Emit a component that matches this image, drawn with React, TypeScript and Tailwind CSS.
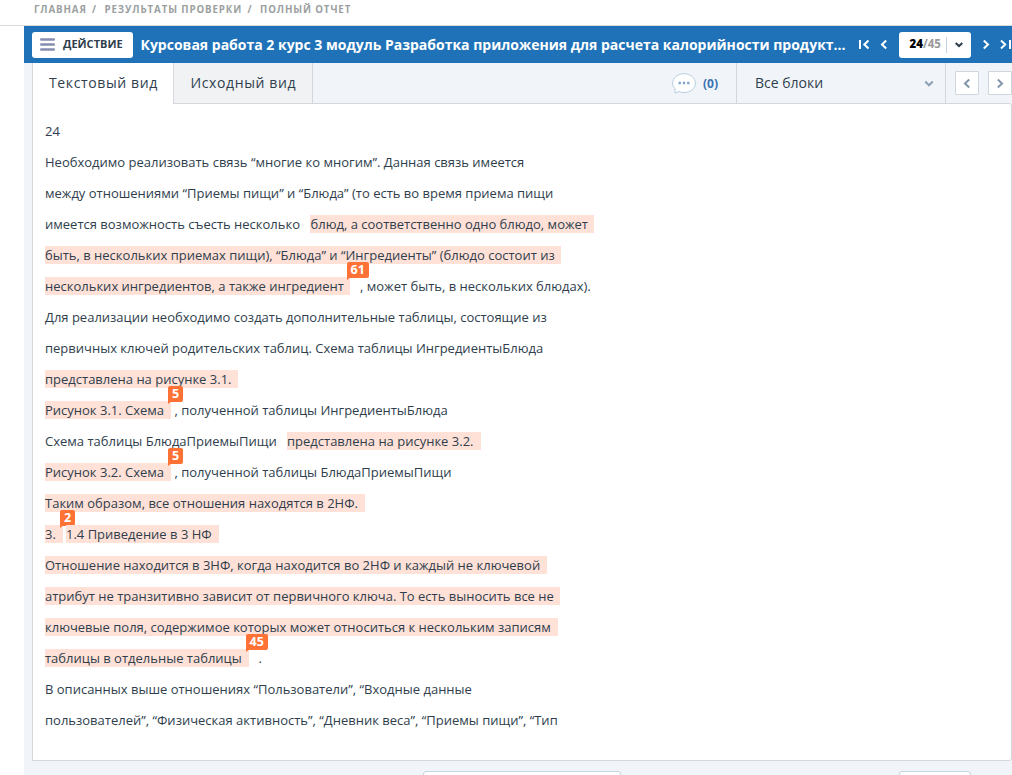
import React from "react";

type Segment = { text: string; className: string; marked?: boolean; badge?: string };

const lines: Segment[][] = [
  [{ text: "24", className: "" }],
  [{ text: "Необходимо реализовать связь “многие ко многим”. Данная связь имеется", className: "" }],
  [{ text: "между отношениями “Приемы пищи” и “Блюда” (то есть во время приема пищи", className: "" }],
  [
    { text: "имеется возможность съесть несколько", className: "w-[265px]" },
    { text: "блюд, а соответственно одно блюдо, может", className: "w-[284px] pl-[0.5px]", marked: true },
  ],
  [{ text: "быть, в нескольких приемах пищи), “Блюда” и “Ингредиенты” (блюдо состоит из", className: "w-[516px]", marked: true }],
  [
    { text: "нескольких ингредиентов, а также ингредиент", className: "w-[305px] mr-[10px]", marked: true, badge: "61" },
    { text: ", может быть, в нескольких блюдах).", className: "" },
  ],
  [{ text: "Для реализации необходимо создать дополнительные таблицы, состоящие из", className: "" }],
  [{ text: "первичных ключей родительских таблиц. Схема таблицы ИнгредиентыБлюда", className: "" }],
  [{ text: "представлена на рисунке 3.1.", className: "w-[193px]", marked: true }],
  [
    { text: "Рисунок 3.1. Схема", className: "w-[126px] mr-[3.5px]", marked: true, badge: "5" },
    { text: ", полученной таблицы ИнгредиентыБлюда", className: "" },
  ],
  [
    { text: "Схема таблицы БлюдаПриемыПищи", className: "w-[242px]" },
    { text: "представлена на рисунке 3.2.", className: "w-[194px]", marked: true },
  ],
  [
    { text: "Рисунок 3.2. Схема", className: "w-[126px] mr-[3.5px]", marked: true, badge: "5" },
    { text: ", полученной таблицы БлюдаПриемыПищи", className: "" },
  ],
  [{ text: "Таким образом, все отношения находятся в 2НФ.", className: "w-[320px]", marked: true }],
  [
    { text: "3.", className: "w-[18px] mr-[3px]", marked: true, badge: "2" },
    { text: "1.4 Приведение в 3 НФ", className: "w-[153px]", marked: true },
  ],
  [{ text: "Отношение находится в 3НФ, когда находится во 2НФ и каждый не ключевой", className: "w-[502px]", marked: true }],
  [{ text: "атрибут не транзитивно зависит от первичного ключа. То есть выносить все не", className: "w-[515px]", marked: true }],
  [{ text: "ключевые поля, содержимое которых может относиться к нескольким записям", className: "w-[513px]", marked: true }],
  [
    { text: "таблицы в отдельные таблицы", className: "w-[204px] mr-[9.500px]", marked: true, badge: "45" },
    { text: ".", className: "" },
  ],
  [{ text: "В описанных выше отношениях “Пользователи”, “Входные данные", className: "" }],
  [{ text: "пользователей”, “Физическая активность”, “Дневник веса”, “Приемы пищи”, “Тип", className: "" }],
];

function Chevron({ dir, className }: { dir: "left" | "right" | "down"; className: string }) {
  const d = { left: "M7.2 1.5 3 5.5l4.2 4", right: "M2.8 1.5 7 5.5l-4.2 4", down: "M1.2 3.5 5 7.3l3.8-3.8" }[dir];
  return (
    <svg viewBox="0 0 10 11" className={className} fill="none" stroke="currentColor" strokeWidth="2">
      <path d={d} />
    </svg>
  );
}

function Badge({ value }: { value: string }) {
  return (
    <span className="absolute -top-[15px] right-[3px]">
      <span
        className={`absolute top-0 left-0 flex h-4 items-center justify-center rounded-[2px] rounded-bl-none bg-[#ff7236] text-[12.5px] leading-4 font-bold text-white ${
          value.length > 1 ? "w-[21.500px]" : "w-[15px]"
        }`}
      >
        {value}
      </span>
      <svg viewBox="0 0 4 3" className="absolute top-[15px] left-0 h-[3px] w-1 fill-[#ff7236]">
        <path d="M0 0h4L0 3z" />
      </svg>
    </span>
  );
}

function Line({ segments }: { segments: Segment[] }) {
  return (
    <div className="flex h-[31px] items-center whitespace-nowrap">
      {segments.map((s, i) => (
        <span
          key={i}
          className={`relative h-[18px] shrink-0 leading-[18px] ${s.marked ? "bg-[#ffe1d7]" : ""} ${s.className}`}
        >
          {s.text}
          {s.badge && <Badge value={s.badge} />}
        </span>
      ))}
    </div>
  );
}

export default function App() {
  return (
    <div className="flex h-[775px] w-[1012px] flex-col overflow-hidden bg-white font-['Open_Sans',sans-serif] text-[13px] text-[#2f3e4d]">
      <nav className="flex h-[26px] shrink-0 border-b border-[#d9dadb] pl-[34px] text-[9.75px] leading-[19px] font-bold tracking-[0.87px] whitespace-pre text-[#9b9f9f]">
        <span className="w-[58px]">ГЛАВНАЯ</span>
        <span className="w-[12.500px]">/</span>
        <span className="w-[143px]">РЕЗУЛЬТАТЫ ПРОВЕРКИ</span>
        <span className="w-[12.500px]">/</span>
        <span>ПОЛНЫЙ ОТЧЕТ</span>
      </nav>

      <div className="ml-6 flex min-h-0 flex-1 flex-col bg-[#f1f5f9]">
        <header className="flex h-[37px] shrink-0 items-center bg-[#1f72b8] pl-2 text-white">
          <button className="flex h-[26px] w-[101px] shrink-0 items-center rounded-[3px] bg-white pl-2 text-[11px] font-bold text-[#2f3e4d]">
            <svg viewBox="0 0 15 13" className="mr-2 h-[13px] w-[15px]" stroke="#858db0" strokeWidth="2.4" strokeLinecap="round">
              <path d="M1.200 1.500h12.600M1.200 6.500h12.600M1.200 11.500h12.600" />
            </svg>
            <span className="pb-px">ДЕЙСТВИЕ</span>
          </button>
          <h1 className="ml-[7.500px] w-[717.500px] shrink-0 text-[14px] font-bold whitespace-nowrap">
            Курсовая работа 2 курс 3 модуль Разработка приложения для расчета калорийности продукт...
          </h1>
          <svg viewBox="0 0 11 11" className="h-[11px] w-[11px] shrink-0" fill="none" stroke="currentColor" strokeWidth="2">
            <path d="M2 1v9M10.500 1.500 6.300 5.500l4.200 4" />
          </svg>
          <Chevron dir="left" className="ml-[10px] h-[11px] w-[10px] shrink-0" />
          <div className="ml-[10px] flex h-[26px] w-[72px] shrink-0 items-center rounded-[3px] bg-white pl-[10.500px] text-[11.500px] text-[#999]">
            <span className="w-[36.500px] pb-px font-bold whitespace-nowrap">
              <b className="text-black">24</b>/45
            </span>
            <span className="h-4 w-px shrink-0 bg-[#c3d5e5]" />
            <svg viewBox="0 0 10 11" className="ml-[7px] h-[11px] w-[10px]" fill="none" stroke="#2f3e4d" strokeWidth="2">
              <path d="M1.700 4 5 7.100 8.300 4" />
            </svg>
          </div>
          <Chevron dir="right" className="ml-[10px] h-[11px] w-[10px] shrink-0" />
          <svg viewBox="0 0 11 11" className="ml-[9px] h-[11px] w-[11px] shrink-0" fill="none" stroke="currentColor" strokeWidth="2">
            <path d="M1 1.500 5.200 5.500 1 9.500M10 1v9" />
          </svg>
        </header>

        <div className="ml-2 flex h-10 shrink-0 text-[14px]">
          <div className="z-10 -mb-px flex w-[142px] items-center border-x border-[#d5d7da] bg-white pb-[3px] pl-4 tracking-[0.62px]">
            Текстовый вид
          </div>
          <div className="flex w-[139px] items-center border-r border-[#d5d7da] bg-[#f1f2f4] pb-[2px] pl-[16.500px] tracking-[0.62px]">
            Исходный вид
          </div>
          <div className="flex w-[424px] items-center justify-end border-r border-[#d5d7da] pr-[18px]">
            <svg viewBox="0 0 24 21" className="mr-[7px] h-[21px] w-6" fill="white" stroke="#b7cde0">
              <path d="M3 20.200V15.500C1.400 14 .6 12.200.6 10.200.6 4.800 5.700.7 12 .7s11.400 4.100 11.400 9.500-5.100 9.400-11.400 9.400c-2 0-3.700-.4-5.200-1.100z" />
              <path d="M6.500 10h2.400M10.800 10h2.400M15.100 10h2.400" stroke="#85a5c8" strokeWidth="2.400" />
            </svg>
            <span className="pt-px text-[12px] font-bold text-[#3873b3]">(0)</span>
          </div>
          <div className="flex w-[209px] items-center justify-between border-r border-[#d5d7da] pr-[11px] pl-[18px]">
            <span className="pb-[2px]">Все блоки</span>
            <Chevron dir="down" className="h-[11px] w-[10px] text-[#8ba0b5]" />
          </div>
          <div className="flex shrink-0 items-center gap-[9px] pl-[9px]">
            <button className="flex h-6 w-6 items-center justify-center rounded-[1px] border border-[#d0d6dd] bg-white text-[#8295aa]">
              <Chevron dir="left" className="h-[11px] w-[10px]" />
            </button>
            <button className="flex h-6 w-6 items-center justify-center rounded-[1px] border border-[#d0d6dd] bg-white text-[#8295aa]">
              <Chevron dir="right" className="h-[11px] w-[10px]" />
            </button>
          </div>
        </div>

        <main className="ml-2 h-[658px] w-[980px] shrink-0 rounded-r-[3px] border border-[#d5d7da] bg-white pt-[11px] pl-3">
          {lines.map((segments, i) => (
            <Line key={i} segments={segments} />
          ))}
        </main>

        <footer className="flex shrink-0 items-start pt-[10px] pl-[399px]">
          <div className="h-8 w-[198px] rounded-[3px] border border-[#c7d6e3] bg-white" />
          <div className="ml-[278px] h-8 w-[72px] rounded-[3px] border border-[#c7d6e3] bg-white" />
        </footer>
      </div>
    </div>
  );
}
